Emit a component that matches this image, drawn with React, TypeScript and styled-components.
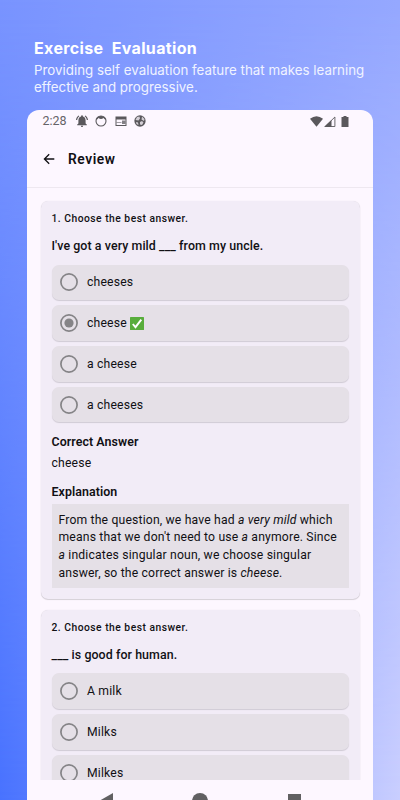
import React from "react";
import styled, { createGlobalStyle } from "styled-components";

const GlobalStyle = createGlobalStyle`
  * { box-sizing: border-box; }
  body { margin: 0; font-family: Roboto, sans-serif; color: #111014; }
  h1, h2, h3, p { margin: 0; }
`;

const Page = styled.main`
  position: relative;
  width: 400px;
  height: 800px;
  overflow: hidden;
  padding: 38px 27px 0;
  background: linear-gradient(100deg, #7994ff, #9fafff);
  &::before {
    content: "";
    position: absolute;
    inset: 0;
    background: linear-gradient(to right, #4872ff, #c9ceff);
    mask-image: linear-gradient(to bottom, transparent, #000);
  }
`;

const Intro = styled.header`
  position: relative;
  height: 72px;
  padding-left: 7px;
  color: #fff;
  font-family: Inter, sans-serif;
`;
const Title = styled.h1`
  font-size: 16px;
  line-height: 21px;
  font-weight: 700;
  letter-spacing: 0.35px;
  white-space: pre;
`;
const Subtitle = styled.p`
  margin-top: 3px;
  font-size: 13.35px;
  line-height: 16.5px;
  color: #f0f3ff;
  white-space: pre;
`;

const Phone = styled.section`
  position: relative;
  display: flex;
  flex-direction: column;
  width: 346px;
  height: 690px;
  border-radius: 12px 12px 0 0;
  background: #fdf7ff;
  overflow: hidden;
`;
const StatusBar = styled.div`
  display: flex;
  align-items: center;
  height: 22px;
  padding: 0 24px 0 15.5px;
  color: #5a585c;
  svg { display: block; }
`;
const Clock = styled.span`
  width: 33px;
  font-size: 12.5px;
  line-height: 16px;
  color: #656367;
`;
const Notices = styled.div`
  display: flex;
  gap: 7.5px;
  flex: 1;
`;
const Signals = styled.div`
  display: flex;
  align-items: center;
  gap: 1px;
`;
const AppBar = styled.div`
  display: flex;
  flex: none;
  align-items: center;
  height: 56px;
  padding: 0 0 1px 16px;
  gap: 13px;
  border-bottom: 1px solid #eee8f0;
`;
const AppTitle = styled.h2`
  font-size: 13.8px;
  line-height: 18px;
  font-weight: 600;
  letter-spacing: 0.55px;
`;
const List = styled.div`
  display: flex;
  flex-direction: column;
  gap: 11px;
  height: 592px;
  padding: 13px 13.5px 0;
  overflow: hidden;
`;
const Card = styled.article`
  flex: none;
  padding: 10px 11px 11px;
  border-radius: 7px;
  background: #f2ecf7;
  box-shadow: 0 1px 1px rgba(0, 0, 0, 0.15), 0 0 1px rgba(0, 0, 0, 0.14);
`;
const Instruction = styled.p`
  font-size: 10.3px;
  line-height: 16px;
  font-weight: 500;
  letter-spacing: 0.49px;
`;
const Question = styled.h3`
  margin: 9.8px 0 10.8px;
  font-size: 12.4px;
  line-height: 17px;
  font-weight: 500;
  letter-spacing: 0.08px;
  white-space: pre;
`;
const Options = styled.div`
  display: flex;
  flex-direction: column;
  gap: 5.15px;
`;
const OptionRow = styled.div`
  display: flex;
  align-items: center;
  gap: 9px;
  height: 35.6px;
  padding-left: 8.5px;
  border-radius: 7px;
  background: #e5e0e7;
  box-shadow: 0 1px 1px rgba(0, 0, 0, 0.14);
  font-size: 12.2px;
  letter-spacing: 0.18px;
`;
const OptionText = styled.span`
  display: flex;
  align-items: center;
  gap: 3.5px;
`;
const Heading = styled.h3<{ $top: number }>`
  margin-top: ${({ $top }) => $top}px;
  font-size: 12.4px;
  line-height: 16px;
  font-weight: 600;
  letter-spacing: 0.07px;
`;
const Answer = styled.p`
  margin-top: 5px;
  font-size: 12.2px;
  line-height: 17px;
  letter-spacing: 0.18px;
`;
const Explanation = styled.p`
  margin-top: 4px;
  height: 84px;
  padding: 7.7px 7px 0;
  background: #e5e0e7;
  font-size: 12.2px;
  line-height: 17.75px;
  letter-spacing: 0.165px;
  white-space: nowrap;
`;
const NavBar = styled.nav`
  display: flex;
  height: 20px;
  justify-content: space-between;
  padding: 13px 72px 0 71.5px;
  svg { display: block; flex: none; }
`;

const Bell = () => (
  <svg width="12" height="12" viewBox="2 2 20 20" fill="currentColor">
    <path d="M7.6 4.1 6.2 2.7C3.8 4.5 2.2 7.3 2 10.5h2C4.2 7.9 5.5 5.5 7.6 4.1zM20 10.5h2c-.2-3.2-1.8-6-4.2-7.8l-1.4 1.4c2.100 1.400 3.400 3.800 3.600 6.400zM18 11c0-3.100-1.600-5.600-4.500-6.300V4a1.500 1.500 0 0 0-3 0v.7C7.600 5.400 6 7.900 6 11v5l-2 2v1h16v-1l-2-2zM12 22a2 2 0 0 0 2-2h-4a2 2 0 0 0 2 2z" />
  </svg>
);
const Face = () => (
  <svg width="12" height="12" viewBox="0 0 24 24" fill="none" stroke="currentColor" strokeWidth="2.2">
    <circle cx="12" cy="12" r="10" />
    <path d="M2 10Q5 9 7 6Q12 10 17 6Q19 9 22 10Q19 2 12 2Q5 2 2 10z" fill="currentColor" stroke="none" />
  </svg>
);
const NewsCard = () => (
  <svg width="12" height="12" viewBox="0 0 24 24" fill="currentColor">
    <path fillRule="evenodd" d="M1 3h22v19H1zM3 9v11h18V9z" />
    <path d="M3 14h10v1.5H3zM14 11h7v7h-7z" opacity=".75" />
  </svg>
);
const Ball = () => (
  <svg width="12" height="12" viewBox="0 0 24 24">
    <circle cx="12" cy="12" r="11.3" fill="#5a585c" />
    <path d="M3 10 6 4l5-1 1 4-3 4zM16 3l5 5-1 4-5-3zM12 14l4-2 3 3-3 5-4-1zM4 14l4 1 1 5-4-2z" fill="#d3ced5" />
  </svg>
);
const Wifi = () => (
  <svg width="13" height="11" viewBox="0 0 13 11">
    <path d="M0 2.7Q6.5-2.3 13 2.7L6.5 10.8z" fill="#5a585c" />
  </svg>
);
const Cell = () => (
  <svg width="12" height="11" viewBox="0 0 12 11">
    <path d="M1.2 10.5H10.9V1z" fill="none" stroke="#5a585c" strokeWidth=".9" />
    <path d="M0 11h7.5V4z" fill="#5a585c" />
  </svg>
);
const BatterySvg = styled.svg`
  margin-left: 4px;
`;

const Radio = ({ on }: { on?: boolean }) => (
  <svg width="18" height="18" viewBox="0 0 18 18">
    <circle cx="9" cy="9" r="8.1" fill="none" stroke="#858487" strokeWidth="1.7" />
    {on && <circle cx="9" cy="9" r="4.6" fill="#858487" />}
  </svg>
);

const CheckEmoji = () => (
  <svg width="14" height="13" viewBox="0 0 14 13">
    <rect width="14" height="13" rx=".6" fill="#58ad3c" />
    <path d="m2.8 7 2.7 3.2L11.3 2.7" fill="none" stroke="#fff" strokeWidth="1.9" />
  </svg>
);

type OptionData = { text: string; on?: boolean; correct?: boolean };

const Choices = ({ items }: { items: OptionData[] }) => (
  <Options>
    {items.map((o) => (
      <OptionRow key={o.text}>
        <Radio on={o.on} />
        <OptionText>{o.text}{o.correct && <CheckEmoji />}</OptionText>
      </OptionRow>
    ))}
  </Options>
);

export default function App() {
  return (
    <>
      <GlobalStyle />
      <Page>
        <Intro>
          <Title>{"Exercise  Evaluation"}</Title>
          <Subtitle>{"Providing self evaluation feature that makes learning\neffective and progressive."}</Subtitle>
        </Intro>
        <Phone>
          <StatusBar>
            <Clock>2:28</Clock>
            <Notices><Bell /><Face /><NewsCard /><Ball /></Notices>
            <Signals>
              <Wifi />
              <Cell />
              <BatterySvg width="8" height="11" viewBox="0 0 8 11">
                <path d="M.5 1h2V0h3v1h2v10h-7z" fill="#5a585c" />
              </BatterySvg>
            </Signals>
          </StatusBar>
          <AppBar>
            <svg width="12" height="12" viewBox="0 0 12 12" fill="none" stroke="#111014" strokeWidth="1.3">
              <path d="M11.3 6H1.5M6.2 1.2 1.4 6l4.8 4.8" />
            </svg>
            <AppTitle>Review</AppTitle>
          </AppBar>
          <List>
            <Card>
              <Instruction>1. Choose the best answer.</Instruction>
              <Question>I've got a very mild ___ from my uncle.</Question>
              <Choices items={[{ text: "cheeses" }, { text: "cheese", on: true, correct: true }, { text: "a cheese" }, { text: "a cheeses" }]} />
              <Heading $top={11.5}>Correct Answer</Heading>
              <Answer>cheese</Answer>
              <Heading $top={12}>Explanation</Heading>
              <Explanation>
                From the question, we have had <i>a very mild</i> which<br />
                means that we don't need to use <i>a</i> anymore. Since<br />
                <i>a</i> indicates singular noun, we choose singular<br />
                answer, so the correct answer is <i>cheese</i>.
              </Explanation>
            </Card>
            <Card>
              <Instruction>2. Choose the best answer.</Instruction>
              <Question>___ is good for human.</Question>
              <Choices items={[{ text: "A milk" }, { text: "Milks" }, { text: "Milkes" }]} />
            </Card>
          </List>
          <NavBar>
            <svg width="14" height="16" viewBox="0 0 14 16"><path d="M14 0v16L0 8z" fill="#616062" /></svg>
            <svg width="16" height="16" viewBox="0 0 16 16"><circle cx="8" cy="8" r="8" fill="#616062" /></svg>
            <svg width="13" height="14" viewBox="0 0 13 14"><path d="M0 1h13v13H0z" fill="#616062" /></svg>
          </NavBar>
        </Phone>
      </Page>
    </>
  );
}
